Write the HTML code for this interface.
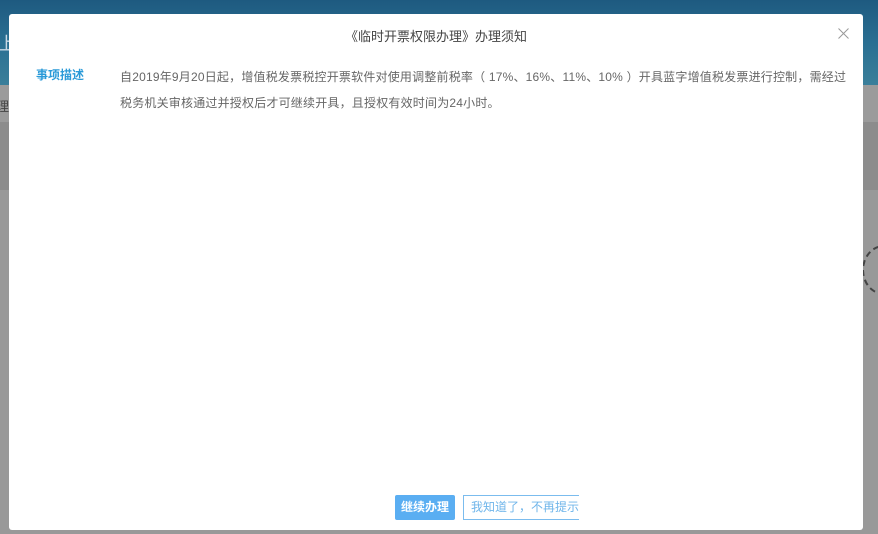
<!DOCTYPE html>
<html><head><meta charset="utf-8"><style>
*{margin:0;padding:0;box-sizing:border-box}
body{width:878px;height:534px;overflow:hidden;position:relative;background:#999;font-family:"Liberation Sans","Noto Sans CJK SC",sans-serif}
.b1{position:absolute;left:0;top:0;width:878px;height:85px;background:linear-gradient(180deg,#1e5a80 0%,#2a6f92 50%,#3a7f9a 100%)}
.b2{position:absolute;left:0;top:85px;width:878px;height:37px;background:#9b9b9b}
.b3{position:absolute;left:0;top:122px;width:878px;height:68px;background:#8c8c8c}
.li{position:absolute;left:-4px;top:96px;font-size:13px;color:#444}
.lu{position:absolute;left:-2px;top:30px;font-size:18px;color:#c8d8e4}
.circ{position:absolute;left:862px;top:245px;width:44px;height:50px;border:2px dashed #444;border-radius:50%}
.m{position:absolute;left:9px;top:14px;width:854px;height:516px;background:#fff;border-radius:3px}
.t{position:absolute;left:0;top:12px;width:100%;text-align:center;font-size:13px;color:#444}
.x{position:absolute;left:829px;top:14px}
.lab{position:absolute;left:27px;top:52px;font-size:12px;color:#2a9ad8;font-weight:bold}
.p{position:absolute;left:111px;top:50px;width:735px;font-size:12px;line-height:26px;color:#666;letter-spacing:0.2px}
.btn1{position:absolute;left:386px;top:481px;width:60px;height:25px;background:#5aaef2;color:#fff;font-size:12px;font-weight:bold;text-align:center;line-height:25px;border-radius:2px}
.btn2{position:absolute;left:454px;top:481px;width:116px;height:25px;border:1px solid #7bbcee;border-right:none;color:#6fb5ea;font-size:12px;line-height:23px;padding-left:7px;overflow:hidden;white-space:nowrap}
</style></head><body>
<div class="b1"></div><div class="b2"></div><div class="b3"></div>
<div class="lu">上</div><div class="li">理</div>
<div class="circ"></div>
<div class="m">
<div class="t">《临时开票权限办理》办理须知</div>
<svg class="x" width="11" height="11" viewBox="0 0 11 11"><path d="M0.5 0.5L10.5 10.5M10.5 0.5L0.5 10.5" stroke="#999" stroke-width="1" fill="none"/></svg>
<div class="lab">事项描述</div>
<div class="p">自2019年9月20日起，增值税发票税控开票软件对使用调整前税率（ 17%、16%、11%、10% ）开具蓝字增值税发票进行控制，需经过税务机关审核通过并授权后才可继续开具，且授权有效时间为24小时。</div>
<div class="btn1">继续办理</div>
<div class="btn2">我知道了，不再提示</div>
</div>
</body></html>
